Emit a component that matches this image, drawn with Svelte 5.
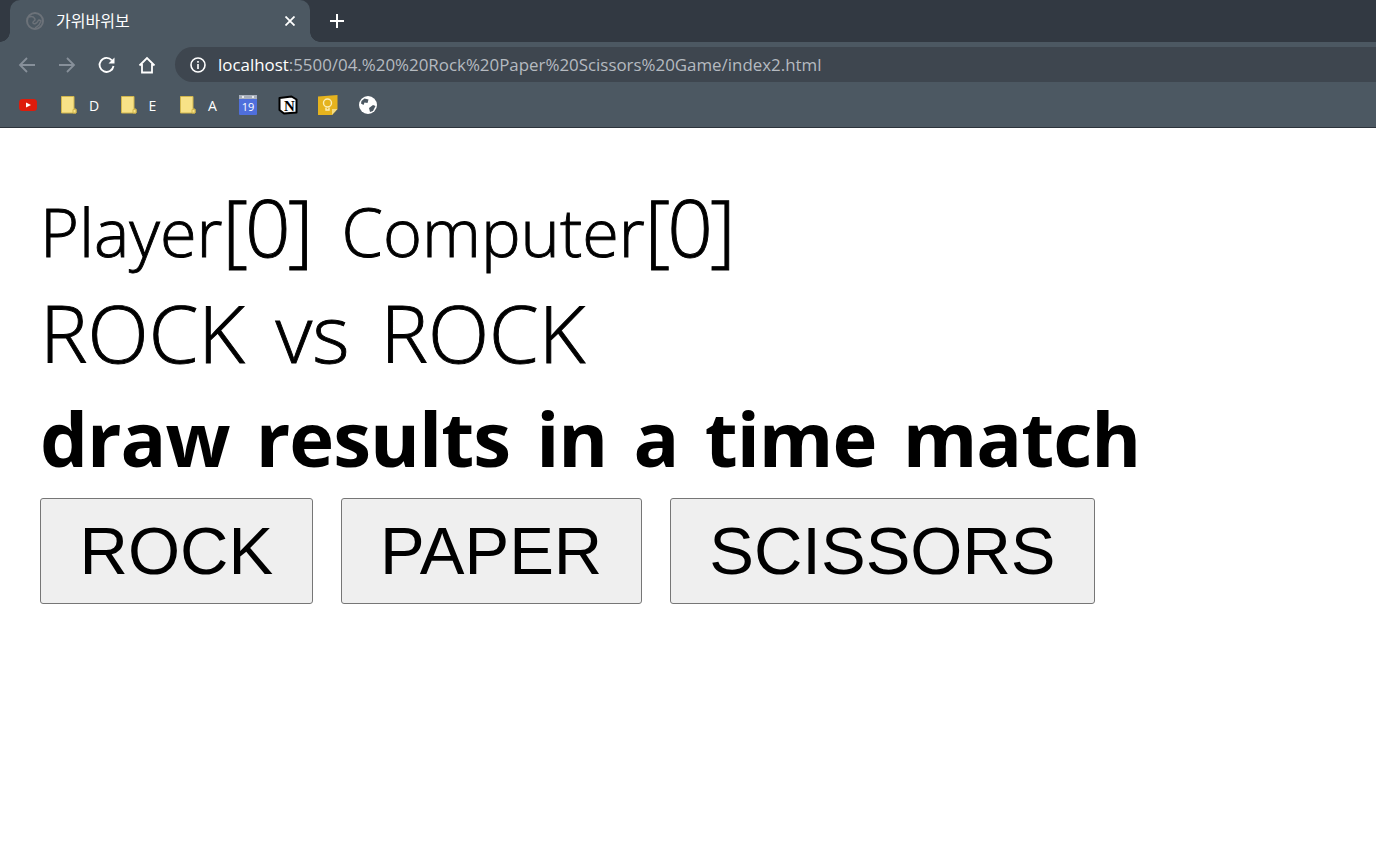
<script>
	const tabTitle = '가위바위보';
	const folders = ['D', 'E', 'A'];
</script>

<div class="browser">
	<div class="tabstrip">
		<div class="tab">
			<svg class="favicon" width="18" height="18" viewBox="0 0 18 18" fill="none">
				<circle cx="9" cy="9" r="8" stroke="#6c7279" stroke-width="2" />
				<path d="M3 5c3-1 5 0 6 2s-3 2-2 4 4 0 5-2 3 0 3 0l-2 4-4 3" stroke="#6c7279" stroke-width="1.500" />
			</svg>
			<span class="tab-title">{tabTitle}</span>
			<svg class="tab-close" width="10" height="10" viewBox="0 0 10 10">
				<path d="M0.500 0.500l9 9M9.500 0.500l-9 9" stroke="#fff" stroke-width="1.800" />
			</svg>
		</div>
		<svg class="new-tab" width="16" height="16" viewBox="0 0 16 16">
			<path d="M8 1v14M1 8h14" stroke="#fff" stroke-width="2" />
		</svg>
	</div>

	<div class="toolbar">
		<div class="nav">
			<svg width="20" height="20" viewBox="0 0 20 20" fill="none" stroke="#87909a" stroke-width="1.800">
				<path d="M18 10H3M10 3l-7 7 7 7" />
			</svg>
			<svg width="20" height="20" viewBox="0 0 20 20" fill="none" stroke="#87909a" stroke-width="1.800">
				<path d="M2 10h15M10 3l7 7-7 7" />
			</svg>
			<svg width="20" height="20" viewBox="0 0 20 20" fill="none">
				<path d="M16.500 11a7 7 0 1 1-1.600-5.600" stroke="#fff" stroke-width="1.800" />
				<path d="M17.500 2.500v6h-6z" fill="#fff" />
			</svg>
			<svg width="20" height="20" viewBox="0 0 20 20" fill="none" stroke="#fff" stroke-width="1.800">
				<path d="M2.500 10.500L10 3l7.500 7.500M5 9v8.500h10V9" />
			</svg>
		</div>
		<div class="omnibox">
			<svg width="16" height="16" viewBox="0 0 16 16" fill="none">
				<circle cx="8" cy="8" r="7" stroke="#fff" stroke-width="1.600" />
				<path d="M8 7v5M8 4v1.800" stroke="#fff" stroke-width="1.600" />
			</svg>
			<span class="url"><span class="host">localhost</span>:5500/04.%20%20Rock%20Paper%20Scissors%20Game/index2.html</span>
		</div>
	</div>

	<div class="bookmarks">
		<svg class="yt" width="18" height="14" viewBox="0 0 18 14">
			<rect y="1" width="18" height="12" rx="3.500" fill="#dd1c0c" />
			<path d="M7 4.500l5 2.500-5 2.500z" fill="#fff" />
		</svg>
		{#each folders as name}
			<div class="folder">
				<svg width="16" height="18" viewBox="0 0 16 18">
					<path d="M.5.500h12.500v12.500h2v4H.5z" fill="#f8e287" stroke="#d1b64c" />
					<path d="M12 13.500h3v3.500h-3z" fill="#f8e287" stroke="#d1b64c" />
				</svg>
				<span>{name}</span>
			</div>
		{/each}
		<svg class="cal" width="18" height="20" viewBox="0 0 18 20">
			<rect width="18" height="20" rx="1" fill="#4f6fdc" />
			<rect width="18" height="4" fill="#a9b0bd" />
			<rect x="3" y="1" width="2" height="2" fill="#e8eaee" />
			<rect x="13" y="1" width="2" height="2" fill="#e8eaee" />
			<text x="9" y="16" class="cal-num">19</text>
		</svg>
		<svg class="notion" width="20" height="20" viewBox="0 0 20 20">
			<path d="M1.500 3L13.500 1.500 18.500 4.500V17.500L6 18.500 1.500 15z" fill="#fff" stroke="#000" stroke-width="2" stroke-linejoin="round" />
			<text x="11.500" y="15.500" class="notion-n">N</text>
		</svg>
		<svg class="keep" width="20" height="20" viewBox="0 0 20 20">
			<path d="M0 1.500L19.500 0v14L14 20H0z" fill="#e5b31e" />
			<path d="M14 20v-6h5.500z" fill="#f3dc84" />
			<circle cx="9.500" cy="8" r="4" fill="none" stroke="#fbeeb8" stroke-width="1.400" />
			<path d="M8 12.500v2.500h3v-2.500" fill="none" stroke="#fbeeb8" stroke-width="1.400" />
		</svg>
		<svg class="globe" width="18" height="18" viewBox="0 0 18 18">
			<circle cx="9" cy="9" r="9" fill="#fff" />
			<path d="M2.500 5l3-2.500 4 1-1 3.500-3-.5-1 2.500-2.500-1.500zM10 12l4-3 2.500 1-2.500 5-3 1z" fill="#4c5862" />
		</svg>
	</div>
</div>

<main class="page">
	<h1 class="score"><span>Player<b>[0]</b></span> <span>Computer<b>[0]</b></span></h1>
	<h1 class="versus">ROCK vs ROCK</h1>
	<h1 class="result">draw results in a time match</h1>
	<div class="choices">
		<button>ROCK</button>
		<button>PAPER</button>
		<button>SCISSORS</button>
	</div>
</main>

<style>
	:global(body) {
		background: #fff;
		overflow: hidden;
	}

	.browser {
		font-family: 'Open Sans', 'Noto Sans CJK KR', sans-serif;
		color: #fff;
	}

	.tabstrip {
		height: 42px;
		padding-left: 10px;
		display: flex;
		align-items: center;
		background: #323942;
	}

	.tab {
		position: relative;
		width: 300px;
		height: 42px;
		box-sizing: border-box;
		padding: 0 15px 0 16px;
		display: flex;
		align-items: center;
		border-radius: 10px 10px 0 0;
		background: #4c5862;
	}

	/* flared bottom corners of the active tab */
	.tab::before,
	.tab::after {
		content: '';
		position: absolute;
		bottom: 0;
		width: 10px;
		height: 10px;
		background: #4c5862;
		-webkit-mask: radial-gradient(circle 10px at var(--cx) 0, transparent 9.500px, #000 10px);
		mask: radial-gradient(circle 10px at var(--cx) 0, transparent 9.500px, #000 10px);
	}

	.tab::before {
		left: -10px;
		--cx: 0;
	}

	.tab::after {
		right: -10px;
		--cx: 10px;
	}

	.tab-title {
		margin-left: 12px;
		margin-top: -3px;
		font-size: 16px;
		font-family: 'Noto Sans CJK KR', sans-serif;
	}

	.tab-close {
		margin-left: auto;
	}

	.new-tab {
		margin-left: 19px;
	}

	.toolbar {
		height: 44px;
		padding-top: 5px;
		box-sizing: border-box;
		display: flex;
		align-items: flex-start;
		background: #4c5862;
	}

	.nav {
		width: 175px;
		height: 35px;
		padding-left: 17px;
		box-sizing: border-box;
		display: flex;
		align-items: center;
		gap: 20px;
	}

	.omnibox {
		flex: 1;
		height: 35px;
		padding-left: 15px;
		display: flex;
		align-items: center;
		gap: 12px;
		border-radius: 18px 0 0 18px;
		background: #3e464f;
	}

	.url {
		font-size: 16.900px;
		color: #b5bac0;
		margin-top: -1px;
	}

	.host {
		color: #fff;
	}

	.bookmarks {
		height: 42px;
		padding: 0 0 3px 19px;
		box-sizing: border-box;
		display: flex;
		align-items: center;
		background: #4c5862;
		border-bottom: 1px solid #2c333b;
	}

	.folder {
		width: 59.500px;
		display: flex;
		align-items: center;
		gap: 12px;
		font-size: 14px;
	}

	.yt {
		margin-right: 24px;
	}

	.cal {
		margin-left: -1px;
	}

	.cal-num {
		font-size: 11px;
		fill: #fff;
		text-anchor: middle;
		font-family: 'Open Sans', sans-serif;
	}

	.notion {
		margin-left: 21px;
	}

	.notion-n {
		font-family: 'Liberation Serif', serif;
		font-weight: 700;
		font-size: 15px;
		text-anchor: middle;
	}

	.keep {
		margin-left: 20px;
	}

	.globe {
		margin-left: 21px;
	}

	.page {
		padding: 0 40px;
		font-family: 'Open Sans', 'Noto Sans CJK KR', sans-serif;
		color: #000;
	}

	h1 {
		margin: 0;
		height: 106px;
		line-height: 106px;
		font-size: 80px;
		font-weight: 300;
		white-space: nowrap;
		-webkit-text-stroke: 0.900px #000;
	}

	.score {
		padding-top: 45px;
		font-size: 66.670px;
		word-spacing: 8px;
	}

	.score span {
		margin-right: 6px;
	}

	.score b {
		font-weight: 300;
		font-size: 80px;
		letter-spacing: -3px;
	}

	.versus {
		word-spacing: 10px;
	}

	.result {
		font-size: 76px;
		font-weight: 700;
		letter-spacing: -1px;
		word-spacing: 7.500px;
		-webkit-text-stroke: 0;
	}

	.choices {
		display: flex;
		gap: 28px;
		margin-top: 7px;
	}

	button {
		height: 106px;
		padding: 0 38.500px 2px;
		font-family: 'Liberation Sans', Arial, sans-serif;
		font-size: 67px;
		color: #000;
		background: #efefef;
		border: 1px solid #767676;
		border-radius: 3px;
	}
</style>
